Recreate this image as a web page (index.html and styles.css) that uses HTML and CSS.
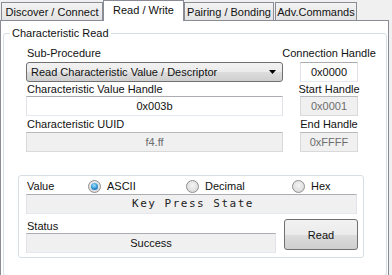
FILE: index.html
```html
<!DOCTYPE html>
<html lang="en">
<head>
    <meta charset="UTF-8">
    <title>Read / Write</title>
    <link rel="stylesheet" href="styles.css">
</head>
<body>

    <!-- Tab strip -->
    <div class="tabs">
        <div class="tab tab-discover">Discover / Connect</div>
        <div class="tab tab-read active">Read / Write</div>
        <div class="tab tab-pair">Pairing / Bonding</div>
        <div class="tab tab-adv">Adv.Commands</div>
    </div>

    <div class="panel">
        <fieldset class="group">
            <legend>Characteristic Read</legend>

            <div class="read-grid">
                <label class="lbl">Sub-Procedure</label>
                <label class="lbl side">Connection Handle</label>

                <div class="combo">
                    <span>Read Characteristic Value / Descriptor</span>
                    <svg class="combo-arrow" width="7" height="4" viewBox="0 0 7 4"><path d="M0 0H7L3.5 4Z" fill="#000"/></svg>
                </div>
                <div class="side"><div class="box small">0x0000</div></div>

                <label class="lbl">Characteristic Value Handle</label>
                <label class="lbl side">Start Handle</label>

                <div class="box">0x003b</div>
                <div class="side"><div class="box small disabled">0x0001</div></div>

                <label class="lbl">Characteristic UUID</label>
                <label class="lbl side">End Handle</label>

                <div class="box disabled">f4.ff</div>
                <div class="side"><div class="box small disabled">0xFFFF</div></div>
            </div>

            <div class="value-box">
                <div class="format-row">
                    <span class="value-lbl">Value</span>
                    <label class="radio r-ascii"><input type="radio" name="fmt" checked> ASCII</label>
                    <label class="radio r-dec"><input type="radio" name="fmt"> Decimal</label>
                    <label class="radio r-hex"><input type="radio" name="fmt"> Hex</label>
                </div>
                <div class="box readonly value-text">Key Press State</div>

                <div class="status-row">
                    <div class="status-col">
                        <span class="lbl">Status</span>
                        <div class="box readonly">Success</div>
                    </div>
                    <button class="read-btn">Read</button>
                </div>
            </div>
        </fieldset>
    </div>

</body>
</html>
```

FILE: styles.css
```css
* {
    box-sizing: border-box;
}

body {
    margin: 0;
    height: 275px;
    overflow: hidden;
    background-color: #f0f0f0;
    font-family: "Liberation Sans", Arial, sans-serif;
    font-size: 11px;
    color: #111;
}

/* Tabs */
.tabs {
    display: flex;
    align-items: flex-start;
    height: 21px;
    padding-left: 1px;
    position: relative;
    z-index: 1;
}

.tab {
    display: flex;
    align-items: center;
    justify-content: center;
    height: 18px;
    margin-top: 2px;
    white-space: nowrap;
    border: 1px solid #898c95;
    border-bottom: none;
    background: linear-gradient(#f3f3f3, #e3e3e3);
}

.tab-discover { width: 102px; }
.tab-read { width: 81px; }
.tab-pair { width: 90px; margin-right: 1px; }
.tab-adv { width: 82px; }

.tab.active {
    height: 21px;
    margin-top: 0;
    padding-bottom: 2px;
    background: #fff;
}

.panel {
    width: 389px;
    height: 255px;
    margin-top: -1px;
    border: 1px solid #898c95;
    border-bottom: none;
    background-color: #fff;
}

/* Group box */
.group {
    min-inline-size: 0;
    height: 250px;
    margin: 5px 1px 0 2px;
    padding: 0;
    border: 1px solid #d5dfe5;
    border-radius: 3px;
}

.group legend {
    margin-left: 6px;
    padding: 0 2px;
    line-height: 14px;
}

.read-grid {
    display: grid;
    grid-template-columns: 257px 92px;
    grid-template-rows: 16px 20px 14px 21px 15px 20px;
    margin: 6px 0 0 22px;
}

.lbl {
    align-self: start;
    line-height: 14px;
    padding-left: 1px;
    white-space: nowrap;
}

.side {
    display: flex;
    justify-content: center;
    text-align: center;
    padding-left: 0;
}

.box {
    height: 20px;
    line-height: 18px;
    text-align: center;
    border: 1px solid #e2e3ea;
    border-top-color: #abadb3;
    border-bottom-color: #e3e9ef;
    background-color: #fff;
}

.box.small {
    width: 58px;
}

.box.disabled {
    color: #6d6d6d;
    background-color: #f0f0f0;
    border-color: #d9d9d9;
    border-top-color: #b7b9bd;
}

.box.readonly {
    background-color: #f0f0f0;
}

.combo {
    display: flex;
    align-items: center;
    justify-content: space-between;
    height: 20px;
    padding: 0 6px 0 4px;
    border: 1px solid #707070;
    border-radius: 3px;
    background: linear-gradient(#f2f2f2, #ebebeb 50%, #dddddd 50%, #cfcfcf);
}

/* Value / Status box */
.value-box {
    width: 346px;
    margin: 23px 0 0 14px;
    padding: 3px 0 4px 7px;
    border: 1px solid #d5dfe5;
    border-radius: 3px;
}

.format-row {
    display: flex;
    align-items: center;
    height: 14px;
    margin-bottom: 1px;
}

.value-lbl {
    width: 62px;
    padding-left: 1px;
}

.radio {
    display: flex;
    align-items: center;
    gap: 6px;
}

.r-ascii { width: 98px; }
.r-dec { width: 106px; }

.radio input {
    appearance: none;
    width: 13px;
    height: 13px;
    margin: 0;
    border: 1px solid #8e8f8f;
    border-radius: 50%;
    background: radial-gradient(circle at 50% 40%, #f4f4f4, #d3d3d3);
    position: relative;
}

.radio input:checked::after {
    content: "";
    position: absolute;
    left: 2px;
    top: 2px;
    width: 7px;
    height: 7px;
    border-radius: 50%;
    background: radial-gradient(circle at 45% 35%, #a5e4fb, #2b8fd6 55%, #19507f);
}

.value-text {
    width: 331px;
    padding-left: 3px;
    font-family: "DejaVu Sans Mono", monospace;
    font-size: 11px;
    letter-spacing: 1.5px;
    color: #222;
}

.status-row {
    display: flex;
    gap: 8px;
    margin-top: 5px;
}

.status-col {
    display: flex;
    flex-direction: column;
    width: 250px;
}

.read-btn {
    width: 74px;
    height: 31px;
    padding: 0;
    font-family: inherit;
    font-size: 11px;
    color: #111;
    border: 1px solid #707070;
    border-radius: 3px;
    background: linear-gradient(#f2f2f2, #ebebeb 50%, #dddddd 50%, #cfcfcf);
}
```
